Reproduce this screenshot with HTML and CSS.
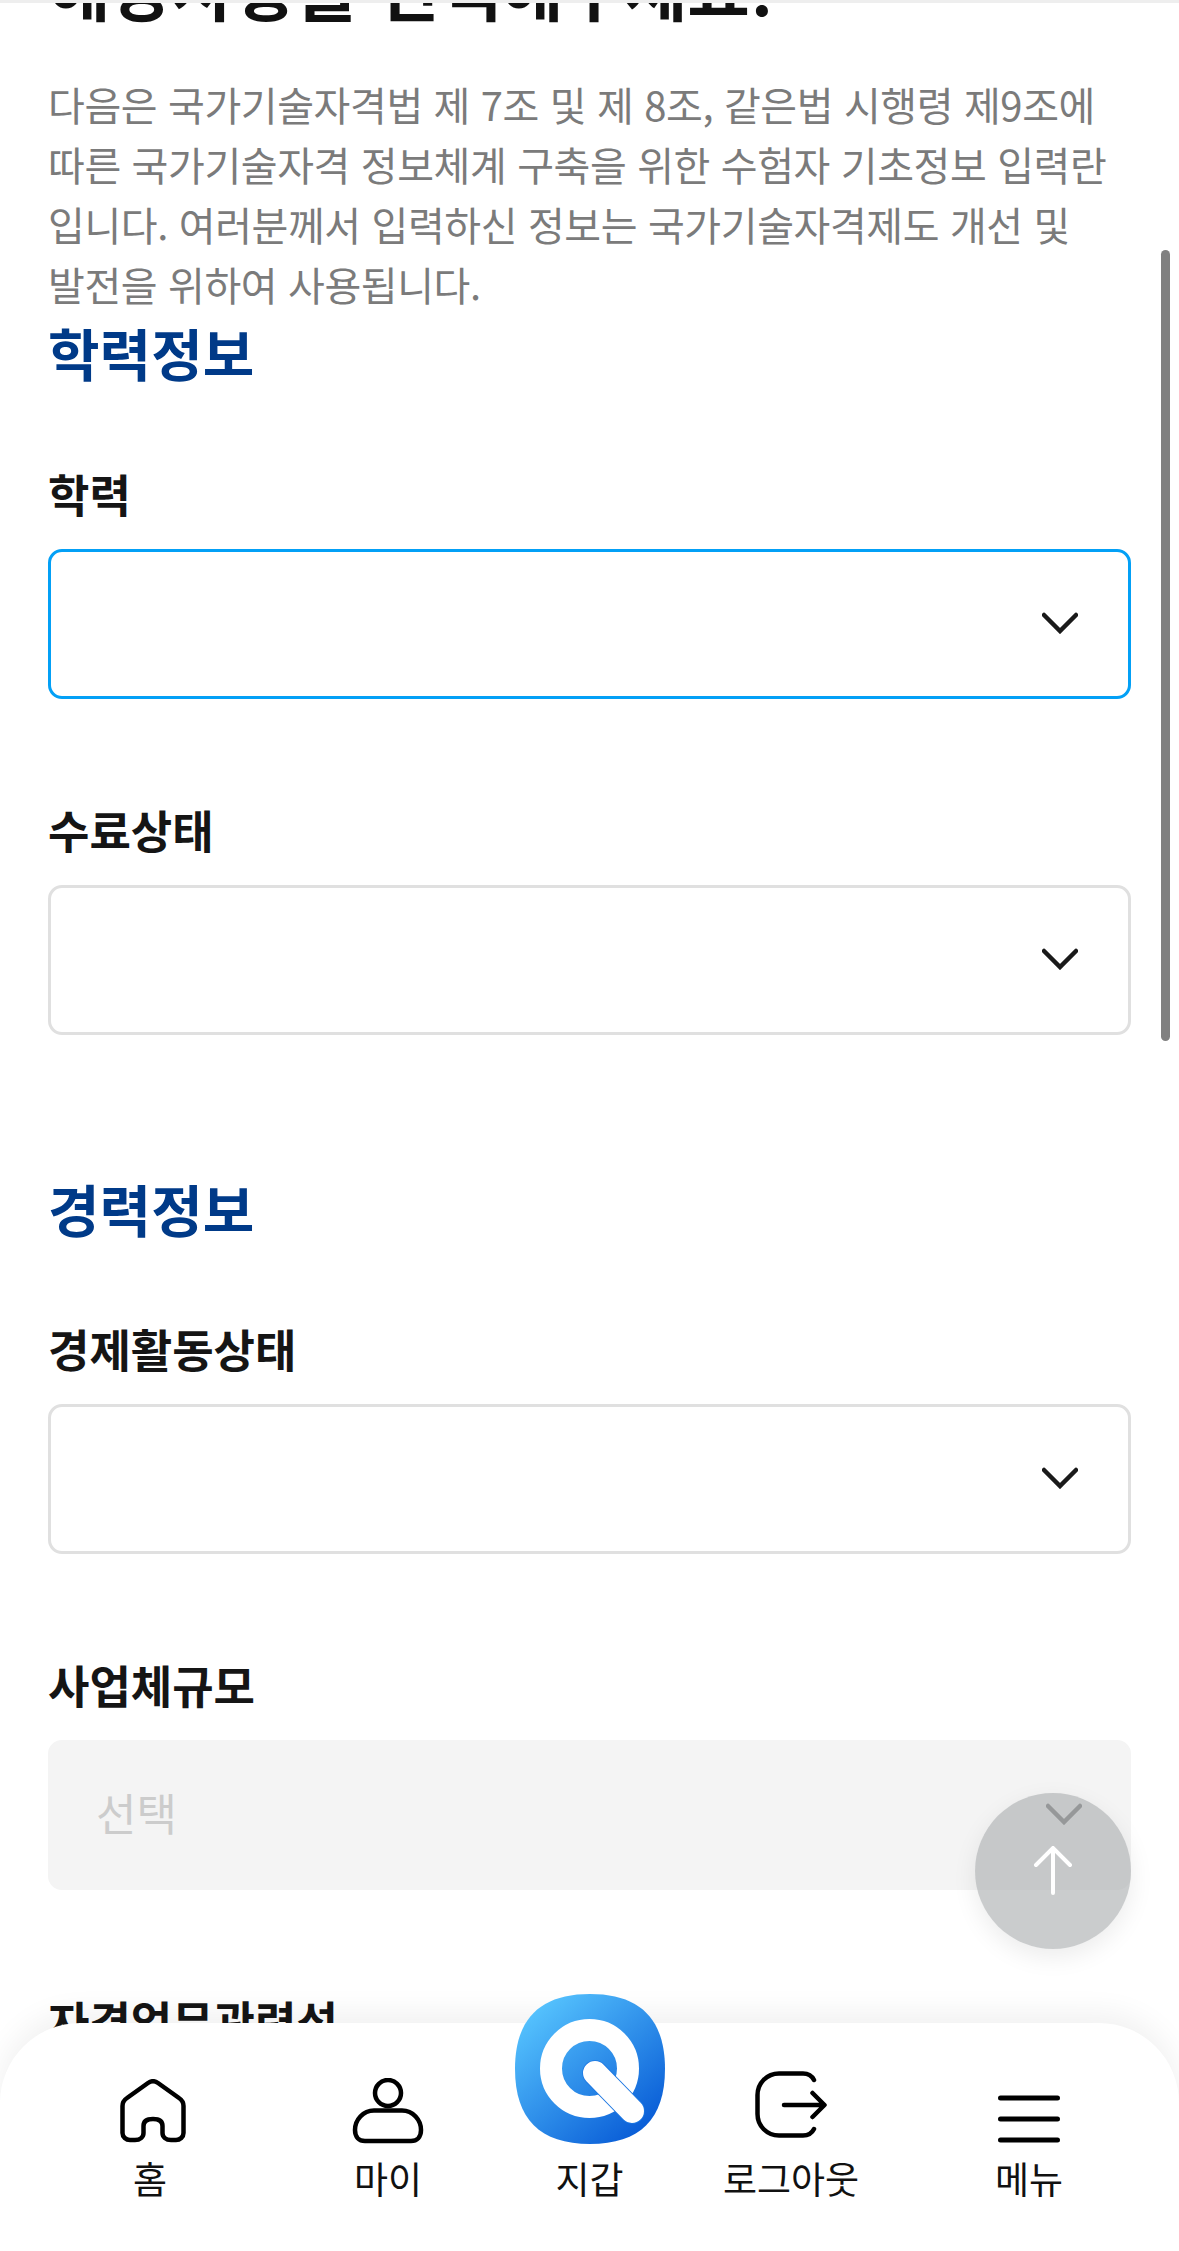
FILE: index.html
```html
<!DOCTYPE html>
<html lang="ko">
<head>
<meta charset="utf-8">
<title>학력정보</title>
<link rel="stylesheet" href="styles.css">
</head>
<body>
<div class="page">
  <main class="content">
    <h1 class="title">해당사항을 선택해주세요!</h1>
    <p class="intro">다음은 국가기술자격법 제 7조 및 제 8조, 같은법 시행령 제9조에 따른 국가기술자격 정보체계 구축을 위한 수험자 기초정보 입력란입니다. 여러분께서 입력하신 정보는 국가기술자격제도 개선 및<br>발전을 위하여 사용됩니다.</p>
    <section class="group group-edu">
      <h2 class="section-title">학력정보</h2>
      <div class="field">
        <div class="label">학력</div>
        <div class="select select-focus"><svg class="chev" viewBox="0 0 36 22"><path d="M2 3 18 19 34 3"/></svg></div>
      </div>
      <div class="field">
        <div class="label">수료상태</div>
        <div class="select"><svg class="chev" viewBox="0 0 36 22"><path d="M2 3 18 19 34 3"/></svg></div>
      </div>
    </section>
    <section class="group group-job">
      <h2 class="section-title">경력정보</h2>
      <div class="field">
        <div class="label">경제활동상태</div>
        <div class="select"><svg class="chev" viewBox="0 0 36 22"><path d="M2 3 18 19 34 3"/></svg></div>
      </div>
      <div class="field">
        <div class="label">사업체규모</div>
        <div class="select select-disabled"><span class="placeholder">선택</span><svg class="chev" viewBox="0 0 36 22"><path d="M2 3 18 19 34 3"/></svg></div>
      </div>
      <div class="field">
        <div class="label">자격업무관련성</div>
      </div>
    </section>
  </main>

  <div class="scrollbar"></div>

  <button class="fab" aria-label="위로">
    <svg viewBox="0 0 40 50" class="fab-icon"><path d="M3 19 20 2 37 19M20 2V47"/></svg>
  </button>

  <nav class="nav">
    <a class="nav-item">
      <div class="ico-box">
        <svg class="ico ico-home" viewBox="0 0 66 64"><path d="M10 61H15C20 61 23.500 58 23.500 54V47C23.500 42 27 40 33 40 39 40 42.500 42 42.500 47V54C42.500 58 46 61 51 61H56C60 61 63.500 58 63.500 54V27C63.500 23 62 21 59 19L38 4C34.500 1.500 31.500 1.500 28 4L7 19C4 21 2.500 23 2.500 27V54C2.500 58 6 61 10 61Z"/></svg>
      </div>
      <span>홈</span>
    </a>
    <a class="nav-item">
      <div class="ico-box">
        <svg class="ico ico-user" viewBox="0 0 72 66"><circle cx="36" cy="15" r="13"/><path d="M22 32.500H50C61 32.500 69 42 69 52 69 59 65 63 59 63H13C7 63 3 59 3 52 3 42 11 32.500 22 32.500Z"/></svg>
      </div>
      <span>마이</span>
    </a>
    <a class="nav-item nav-wallet">
      <svg class="logo" viewBox="0 0 150 150">
        <defs><linearGradient id="lg" x1="0.150" y1="0.100" x2="0.850" y2="0.900"><stop offset="0" stop-color="#54c1fd"/><stop offset="1" stop-color="#0a5ed7"/></linearGradient></defs>
        <path fill="url(#lg)" d="M75 0C125 0 150 25 150 75S125 150 75 150 0 125 0 75 25 0 75 0Z"/>
        <circle cx="74.500" cy="74.500" r="38.500" fill="none" stroke="#fff" stroke-width="22"/>
        <path d="M80 79 117 117" fill="none" stroke="#1d78e3" stroke-width="25.500" stroke-linecap="round"/>
        <path d="M80 79 117 117" fill="none" stroke="#fff" stroke-width="24" stroke-linecap="round"/>
      </svg>
      <div class="ico-box"></div>
      <span>지갑</span>
    </a>
    <a class="nav-item">
      <div class="ico-box">
        <svg class="ico ico-exit" viewBox="0 0 72 68"><path d="M59 9C57 5 53 2.500 48 2.500H24C12 2.500 2.500 12 2.500 24V43C2.500 55 12 64.500 24 64.500H48C53 64.500 57 62 59 58"/><path d="M29 34H69M57.500 22 69.500 34 57.500 46"/></svg>
      </div>
      <span>로그아웃</span>
    </a>
    <a class="nav-item">
      <div class="ico-box">
        <svg class="ico ico-menu" viewBox="0 0 62 50"><path d="M2.500 3H59.500M2.500 24H59.500M2.500 45H59.500"/></svg>
      </div>
      <span>메뉴</span>
    </a>
  </nav>
</div>
</body>
</html>
```

FILE: styles.css
```css
* { box-sizing: border-box; }
html, body { margin: 0; padding: 0; background: #fff; }
body {
  font-family: "Noto Sans CJK KR", "Noto Sans", sans-serif;
  color: #111;
}
.page {
  position: relative;
  width: 1179px;
  height: 2251px;
  overflow: hidden;
  border-top: 3px solid #eeeeee;
}
.content { padding: 0 48px; }
.title {
  margin: -52px 0 0;
  font-size: 68px;
  line-height: 72px;
  font-weight: 700;
  letter-spacing: -0.5px;
  white-space: nowrap;
}
.intro {
  margin: 51px 0 0;
  font-size: 40px;
  line-height: 60px;
  font-weight: 400;
  color: #7b7b7b;
  letter-spacing: -0.4px;
}
.section-title {
  margin: 0;
  font-size: 56px;
  line-height: 72px;
  font-weight: 700;
  color: #003a88;
  letter-spacing: 0.1px;
}
.group-edu { margin-top: 2px; }
.group-job { margin-top: 137px; }
.field { margin-top: 78px; }
.group-job .field { margin-top: 77px; }
.field + .field, .group-job .field + .field { margin-top: 103px; }
.label {
  font-size: 45px;
  line-height: 56px;
  font-weight: 700;
  color: #151515;
}
.select {
  margin-top: 27px;
  height: 150px;
  border: 3px solid #e0e0e0;
  border-radius: 14px;
  background: #fff;
  display: flex;
  align-items: center;
  justify-content: space-between;
  padding: 0 48px 0 45px;
}
.select-focus { border-color: #03a0f6; }
.select-disabled {
  background: #f4f4f4;
  border-color: #f4f4f4;
  color: #cccccc;
  font-size: 44px;
}
.placeholder { margin-top: -6px; }
.chev {
  width: 36px;
  height: 22px;
  margin-left: auto;
  margin-right: 2px;
  margin-top: -3px;
  fill: none;
  stroke: #1a1a1a;
  stroke-width: 4.500;
  stroke-linecap: round;
}
.select-disabled .chev { margin-right: -2px; stroke: #777; }
.scrollbar {
  position: absolute;
  left: 1161px;
  top: 247px;
  width: 9px;
  height: 791px;
  border-radius: 5px;
  background: #808080;
}
.fab {
  position: absolute;
  left: 975px;
  top: 1790px;
  width: 156px;
  height: 156px;
  padding: 0;
  border: 0;
  border-radius: 50%;
  background: rgba(170, 172, 175, 0.62);
  box-shadow: 0 8px 24px rgba(0, 0, 0, 0.08);
  display: flex;
  align-items: center;
  justify-content: center;
}
.fab-icon {
  width: 40px;
  height: 50px;
  fill: none;
  stroke: #fff;
  stroke-width: 4;
  stroke-linecap: round;
  stroke-linejoin: miter;
}
.nav {
  position: absolute;
  left: 0;
  right: 0;
  top: 2020px;
  height: 231px;
  padding: 0 14px;
  background: #fff;
  border-radius: 80px 80px 0 0;
  box-shadow: 0 -10px 30px rgba(0, 0, 0, 0.06);
  display: grid;
  grid-template-columns: 272px 204px 199px 204px 272px;
  align-items: start;
}
.nav-item {
  display: flex;
  flex-direction: column;
  align-items: center;
  height: 100%;
  font-size: 37px;
  line-height: 48px;
  color: #111;
  position: relative;
  padding-top: 48px;
}
.nav-item span { margin-top: 11px; white-space: nowrap; }
.ico-box {
  height: 72px;
  display: flex;
  align-items: flex-start;
  justify-content: center;
}
.ico {
  display: block;
  fill: none;
  stroke: #000;
  stroke-width: 4.500;
  stroke-linecap: round;
  stroke-linejoin: round;
}
.ico-home { width: 66px; height: 64px; margin: 8px 0 0 6px; }
.ico-user { width: 72px; height: 66px; margin: 7px 0 0 0; }
.ico-exit { width: 72px; height: 68px; }
.ico-menu { width: 62px; height: 50px; margin-top: 24px; stroke-width: 5; }
.logo {
  position: absolute;
  left: 25px;
  top: -29px;
  width: 150px;
  height: 150px;
}
```
